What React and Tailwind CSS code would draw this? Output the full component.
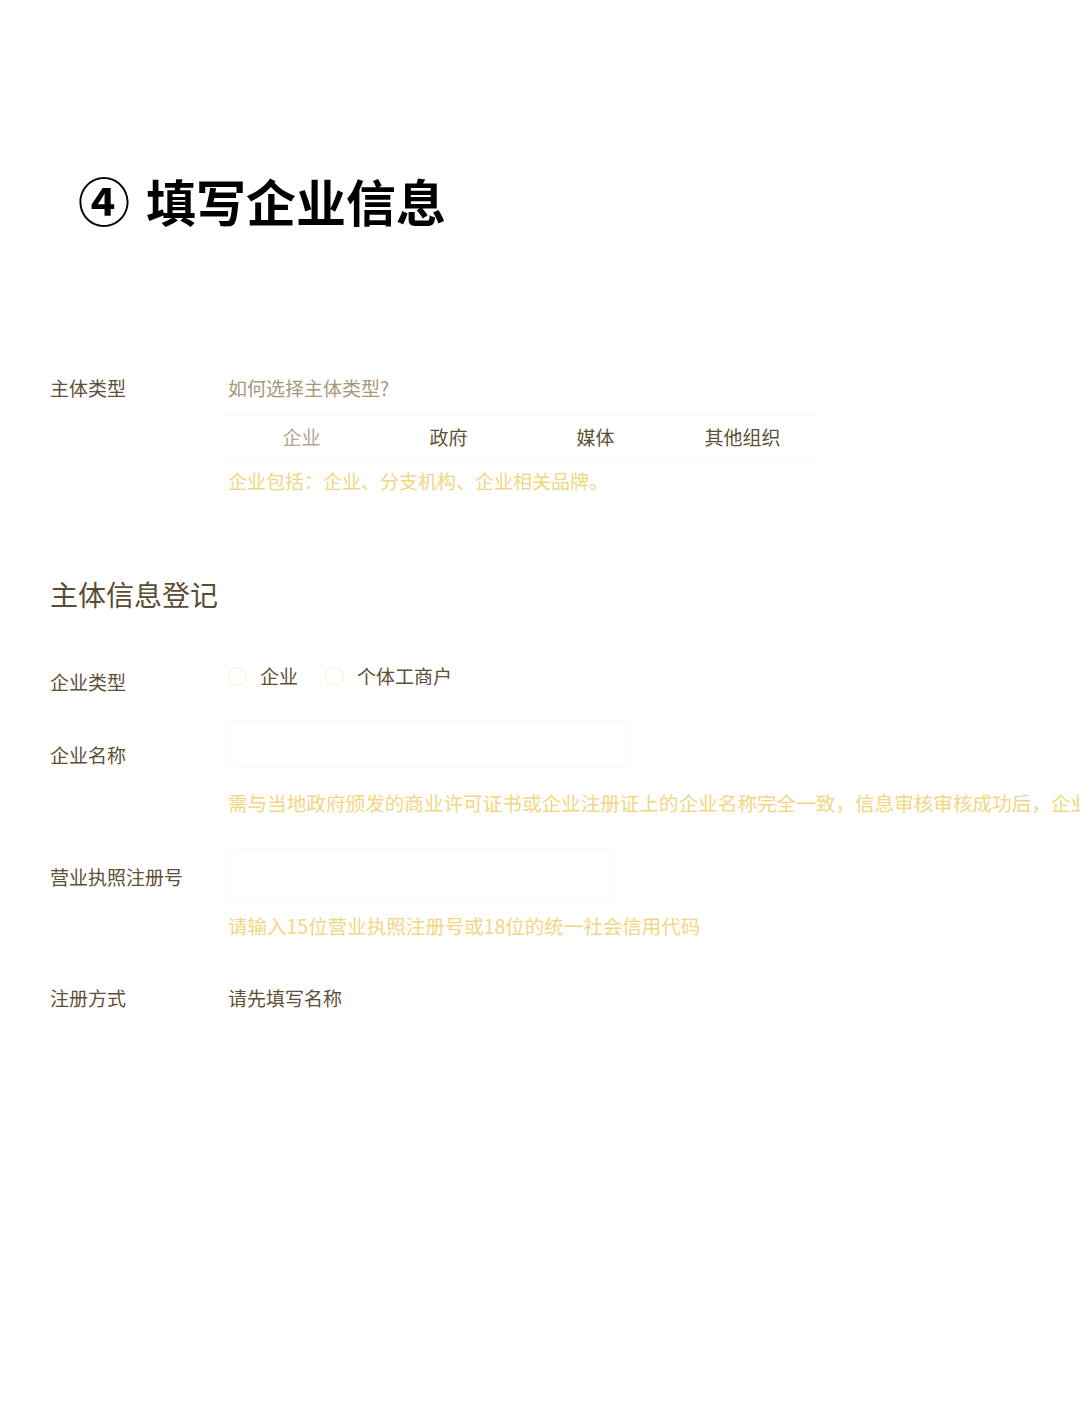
import React from "react";

const FONT = { fontFamily: '"Noto Sans CJK SC", "Noto Sans", sans-serif' };

const Row = ({ label, children, className = "" }) => (
  <div className={"flex " + className}>
    <div className="w-[178px] shrink-0 text-[19px] leading-[26px] text-[#5e5036]">{label}</div>
    <div className="flex-1 min-w-0">{children}</div>
  </div>
);

const Radio = ({ label }) => (
  <label className="flex items-center gap-[13px]">
    <span className="w-[19px] h-[19px] rounded-full border border-[#f7eecb] bg-white" />
    <span className="text-[19px] leading-[26px] text-[#5e5036]">{label}</span>
  </label>
);

const tabs = ["企业", "政府", "媒体", "其他组织"];

export default function App() {
  return (
    <div className="w-[1080px] h-[1410px] bg-white overflow-hidden" style={FONT}>
      <h1 className="pt-[167px] pl-[78px] flex items-center gap-[16px] text-[50px] leading-[66px] font-bold text-black">
        <span className="text-[52px]">④</span>
        <span>填写企业信息</span>
      </h1>

      <div className="pl-[50px] pt-[142px]">
        <Row label="主体类型">
          <div className="text-[19px] leading-[26px] text-[#a8987a]">如何选择主体类型?</div>
          <div className="mt-[13px] flex w-[590px] border-y border-[#fcf8ea]">
            {tabs.map((t, i) => (
              <div
                key={t}
                className={
                  "w-[147px] h-[44px] flex items-center justify-center text-[19px] " +
                  (i === 0 ? "text-[#b2a690]" : "text-[#5e5036]")
                }
              >
                {t}
              </div>
            ))}
          </div>
          <div className="mt-[8px] text-[19px] leading-[26px] text-[#f0d682]">
            企业包括：企业、分支机构、企业相关品牌。
          </div>
        </Row>

        <h2 className="mt-[82px] text-[28px] leading-[36px] text-[#5a4c32]">主体信息登记</h2>

        <Row label="企业类型" className="mt-[57px]">
          <div className="flex items-center gap-[27px] -mt-[6px]">
            <Radio label="企业" />
            <Radio label="个体工商户" />
          </div>
        </Row>

        <Row label="企业名称" className="mt-[47px]">
          <div className="-mt-[22px] w-[404px] h-[46px] border border-[#fdf9ec]" />
          <div className="mt-[24px] whitespace-nowrap text-[19.6px] leading-[26px] text-[#f2d682]">
            需与当地政府颁发的商业许可证书或企业注册证上的企业名称完全一致，信息审核审核成功后，企业名称不可修改
          </div>
        </Row>

        <Row label="营业执照注册号" className="mt-[48px]">
          <div className="-mt-[14px] w-[384px] h-[50px] border border-[#fdf9ec]" />
          <div className="mt-[13px] text-[19.5px] leading-[26px] text-[#f2d682]">
            请输入15位营业执照注册号或18位的统一社会信用代码
          </div>
        </Row>

        <Row label="注册方式" className="mt-[46px]">
          <div className="text-[19px] leading-[26px] text-[#5e5036]">请先填写名称</div>
        </Row>
      </div>
    </div>
  );
}
